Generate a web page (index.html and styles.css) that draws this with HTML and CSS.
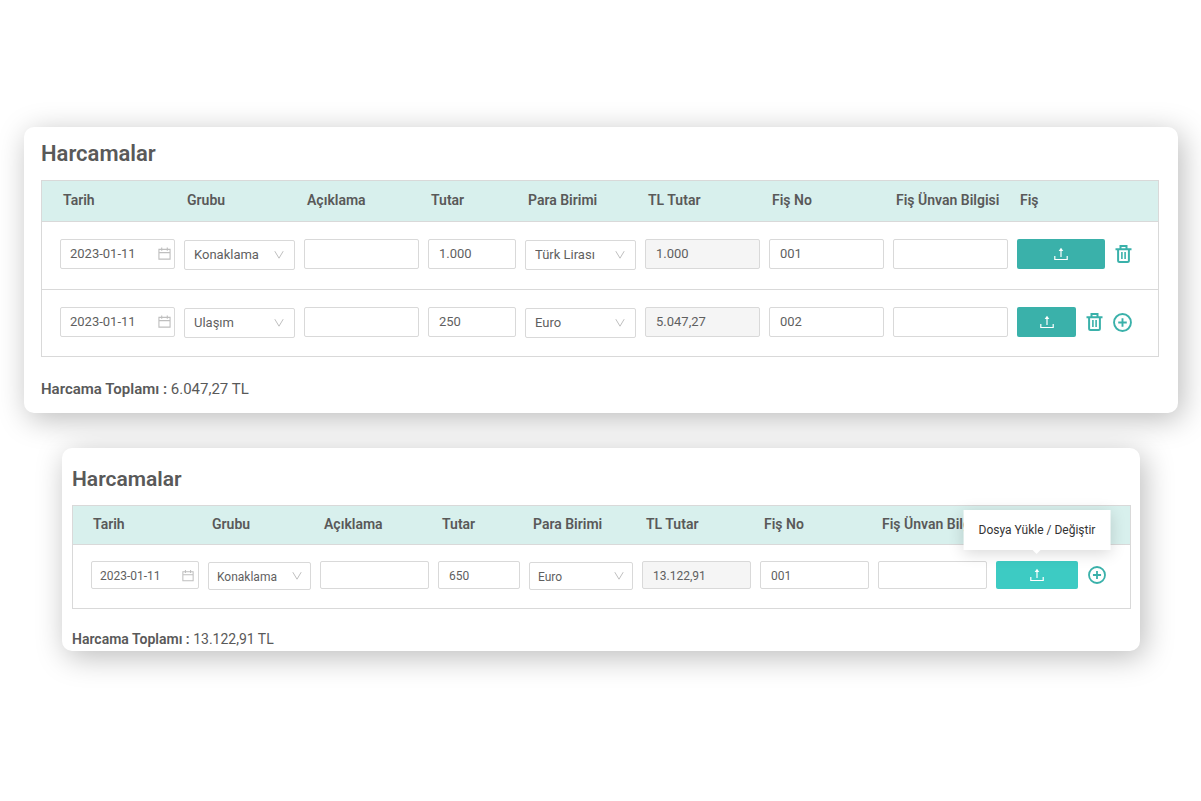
FILE: index.html
```html
<!DOCTYPE html>
<html lang="tr">
<head>
    <meta charset="UTF-8">
    <meta name="viewport" content="width=device-width, initial-scale=1.0">
    <title>Harcamalar</title>
    <link rel="stylesheet" href="styles.css">
</head>
<body>
    <svg class="sprite" aria-hidden="true">
        <symbol id="calendar" viewBox="0 0 14 14">
            <path d="M1 2.500h12v10.500h-12zM1 6h12M4 .5v3.500M10 .5v3.500" fill="none" stroke="currentColor" stroke-width="1.200"/>
        </symbol>
        <symbol id="chevron" viewBox="0 0 10 10">
            <path d="M.8 1.200L5 8.200l4.200-7" fill="none" stroke="currentColor"/>
        </symbol>
        <symbol id="upload" viewBox="0 0 14 14">
            <path d="M.8 9v3.500h12.400V9M7 10V2.500" fill="none" stroke="currentColor" stroke-width="1.200"/>
            <path d="M7 .8l2.300 3.200H4.700z" fill="currentColor"/>
        </symbol>
        <symbol id="trash" viewBox="0 0 16 18">
            <path d="M0 4.200h16M5 4V1h6v3M2.600 4v11.500q0 1.500 1.500 1.500h7.800q1.500 0 1.500-1.500V4" fill="none" stroke="currentColor" stroke-width="2"/>
            <path d="M6.400 7v7M9.600 7v7" fill="none" stroke="currentColor" stroke-width="1.600"/>
        </symbol>
        <symbol id="plus" viewBox="0 0 20 20">
            <circle cx="10" cy="10" r="8.900" fill="none" stroke="currentColor" stroke-width="2"/>
            <path d="M10 5.500v9M5.500 10h9" fill="none" stroke="currentColor" stroke-width="2"/>
        </symbol>
    </svg>

    <main>
        <section class="panel">
            <h2>Harcamalar</h2>
            <table>
                <colgroup>
                    <col class="col-date"><col class="col-group"><col class="col-text"><col class="col-amount"><col class="col-currency">
                    <col class="col-text"><col class="col-text"><col class="col-text"><col class="col-actions">
                </colgroup>
                <thead>
                    <tr>
                        <th>Tarih</th>
                        <th>Grubu</th>
                        <th>Açıklama</th>
                        <th>Tutar</th>
                        <th>Para Birimi</th>
                        <th>TL Tutar</th>
                        <th>Fiş No</th>
                        <th>Fiş Ünvan Bilgisi</th>
                        <th>Fiş</th>
                    </tr>
                </thead>
                <tbody>
                    <tr>
                        <td><div class="field"><input type="text" aria-label="Tarih" value="2023-01-11"><svg class="calendar"><use href="#calendar"/></svg></div></td>
                        <td><div class="field select"><select aria-label="Grubu"><option>Konaklama</option><option>Ulaşım</option></select><svg class="chevron"><use href="#chevron"/></svg></div></td>
                        <td><input type="text" aria-label="Açıklama"></td>
                        <td><input type="text" aria-label="Tutar" value="1.000"></td>
                        <td><div class="field select"><select aria-label="Para Birimi"><option>Türk Lirası</option><option>Euro</option></select><svg class="chevron"><use href="#chevron"/></svg></div></td>
                        <td><input type="text" aria-label="TL Tutar" value="1.000" readonly></td>
                        <td><input type="text" aria-label="Fiş No" value="001"></td>
                        <td><input type="text" aria-label="Fiş Ünvan Bilgisi"></td>
                        <td>
                            <div class="actions">
                                <button class="upload" type="button" aria-label="Dosya Yükle"><svg><use href="#upload"/></svg></button>
                                <button class="icon trash" type="button" aria-label="Sil"><svg><use href="#trash"/></svg></button>
                            </div>
                        </td>
                    </tr>
                    <tr>
                        <td><div class="field"><input type="text" aria-label="Tarih" value="2023-01-11"><svg class="calendar"><use href="#calendar"/></svg></div></td>
                        <td><div class="field select"><select aria-label="Grubu"><option>Ulaşım</option><option>Konaklama</option></select><svg class="chevron"><use href="#chevron"/></svg></div></td>
                        <td><input type="text" aria-label="Açıklama"></td>
                        <td><input type="text" aria-label="Tutar" value="250"></td>
                        <td><div class="field select"><select aria-label="Para Birimi"><option>Euro</option><option>Türk Lirası</option></select><svg class="chevron"><use href="#chevron"/></svg></div></td>
                        <td><input type="text" aria-label="TL Tutar" value="5.047,27" readonly></td>
                        <td><input type="text" aria-label="Fiş No" value="002"></td>
                        <td><input type="text" aria-label="Fiş Ünvan Bilgisi"></td>
                        <td>
                            <div class="actions">
                                <button class="upload" type="button" aria-label="Dosya Yükle"><svg><use href="#upload"/></svg></button>
                                <button class="icon trash" type="button" aria-label="Sil"><svg><use href="#trash"/></svg></button>
                                <button class="icon plus" type="button" aria-label="Ekle"><svg><use href="#plus"/></svg></button>
                            </div>
                        </td>
                    </tr>
                </tbody>
            </table>
            <p class="total"><strong>Harcama Toplamı :</strong> 6.047,27 TL</p>
        </section>

        <section class="panel small">
            <h2>Harcamalar</h2>
            <table>
                <colgroup>
                    <col class="col-date"><col class="col-group"><col class="col-text"><col class="col-amount"><col class="col-currency">
                    <col class="col-text"><col class="col-text"><col class="col-text"><col class="col-actions">
                </colgroup>
                <thead>
                    <tr>
                        <th>Tarih</th>
                        <th>Grubu</th>
                        <th>Açıklama</th>
                        <th>Tutar</th>
                        <th>Para Birimi</th>
                        <th>TL Tutar</th>
                        <th>Fiş No</th>
                        <th>Fiş Ünvan Bilgisi</th>
                        <th></th>
                    </tr>
                </thead>
                <tbody>
                    <tr>
                        <td><div class="field"><input type="text" aria-label="Tarih" value="2023-01-11"><svg class="calendar"><use href="#calendar"/></svg></div></td>
                        <td><div class="field select"><select aria-label="Grubu"><option>Konaklama</option><option>Ulaşım</option></select><svg class="chevron"><use href="#chevron"/></svg></div></td>
                        <td><input type="text" aria-label="Açıklama"></td>
                        <td><input type="text" aria-label="Tutar" value="650"></td>
                        <td><div class="field select"><select aria-label="Para Birimi"><option>Euro</option><option>Türk Lirası</option></select><svg class="chevron"><use href="#chevron"/></svg></div></td>
                        <td><input type="text" aria-label="TL Tutar" value="13.122,91" readonly></td>
                        <td><input type="text" aria-label="Fiş No" value="001"></td>
                        <td><input type="text" aria-label="Fiş Ünvan Bilgisi"></td>
                        <td>
                            <div class="actions">
                                <button class="upload active" type="button" aria-describedby="upload-tip"><svg><use href="#upload"/></svg><span class="tooltip" id="upload-tip" role="tooltip">Dosya Yükle / Değiştir</span></button>
                                <button class="icon plus" type="button" aria-label="Ekle"><svg><use href="#plus"/></svg></button>
                            </div>
                        </td>
                    </tr>
                </tbody>
            </table>
            <p class="total"><strong>Harcama Toplamı :</strong> 13.122,91 TL</p>
        </section>
    </main>
</body>
</html>
```
FILE: styles.css
```css
* {
    box-sizing: border-box;
}

body {
    margin: 0;
    font-family: Roboto, sans-serif;
    background-color: #fff;
    color: #595959;
}

.sprite {
    display: none;
}

main {
    padding: 127px 23px 40px 24px;
}

.panel {
    padding: 13px 19px 14px 17px;
    background-color: #fff;
    border-radius: 10px;
    box-shadow: 4px 6px 30px rgba(0, 0, 0, 0.27);
}

h2 {
    margin: 0 0 12px;
    font-size: 22px;
    line-height: 28px;
    font-weight: 600;
}

/* Expense table */
table {
    width: 100%;
    table-layout: fixed;
    border: 1px solid #d9d9d9;
    border-spacing: 0;
}

.col-date {
    width: 142px;
}

.col-group, .col-currency {
    width: 120px;
}

.col-text {
    width: 124px;
}

.col-amount {
    width: 97px;
}

.col-actions {
    width: 141px;
}

th {
    height: 41px;
    padding: 0 0 2px 3px;
    background-color: #d8f0ed;
    border-bottom: 1px solid #d9d9d9;
    font-size: 14px;
    font-weight: 600;
    text-align: left;
    white-space: nowrap;
}

th:first-child {
    padding-left: 21px;
}

td {
    padding: 17px 9px 19px 0;
    vertical-align: top;
}

td:first-child {
    padding-left: 18px;
}

td:last-child {
    padding-right: 26px;
}

tr + tr td {
    padding-bottom: 18px;
    border-top: 1px solid #d9d9d9;
}

/* Fields */
.field {
    position: relative;
}

.select {
    padding-top: 1px;
}

input, select {
    display: block;
    width: 100%;
    height: 30px;
    margin: 0;
    padding: 0 10px 1px;
    background-color: #fff;
    border: 1px solid #d9d9d9;
    border-radius: 2px;
    color: #5f5f5f;
    font-family: inherit;
    font-size: 13px;
}

select {
    appearance: none;
}

.field input, .field select {
    padding-left: 9px;
}

input[readonly] {
    background-color: #f5f5f5;
}

.calendar, .chevron {
    position: absolute;
    pointer-events: none;
    color: #bfbfbf;
}

.calendar {
    top: 8px;
    right: 4px;
    width: 13px;
    height: 13px;
}

.chevron {
    top: 11px;
    right: 11px;
    width: 10px;
    height: 10px;
}

/* Row actions */
.actions {
    display: flex;
    align-items: center;
    gap: 10px;
}

button {
    padding: 0;
    border: none;
    font-family: inherit;
    cursor: pointer;
}

button svg {
    display: block;
    width: 100%;
    height: 100%;
}

.upload {
    position: relative;
    display: flex;
    flex: 1;
    align-items: center;
    justify-content: center;
    height: 30px;
    background-color: #3ab1aa;
    border-radius: 2px;
    color: #fff;
}

.upload svg {
    width: 14px;
    height: 14px;
}

.upload.active {
    background-color: #3dcbc3;
}

.icon {
    background: none;
    color: #3ab1aa;
}

.trash {
    width: 17px;
    height: 18px;
}

.plus {
    width: 19px;
    height: 19px;
}

.total {
    margin: 22px 0 0;
    font-size: 15px;
    line-height: 20px;
}

.total strong {
    font-weight: 600;
}

/* Smaller panel */
.small {
    margin: 35px 38px 0 38px;
    padding: 18px 9px 2px 10px;
}

.small h2 {
    margin-bottom: 13px;
    font-size: 21px;
    line-height: 26px;
}

.small .col-date {
    width: 135px;
}

.small .col-group {
    width: 112px;
}

.small .col-currency {
    width: 113px;
}

.small .col-text {
    width: 118px;
}

.small .col-amount {
    width: 91px;
}

.small .col-actions {
    width: 134px;
}

.small th {
    height: 39px;
    padding-left: 4px;
}

.small th:first-child {
    padding-left: 20px;
}

.small td {
    padding-top: 16px;
    padding-bottom: 18px;
}

.small td:last-child {
    padding-right: 24px;
}

.small input, .small select, .small .upload {
    height: 28px;
    padding-bottom: 0;
    font-size: 12px;
}

.small input, .small select {
    padding-top: 1px;
}

.small .field input, .small .field select {
    padding-left: 8px;
}

.small .calendar {
    right: 5px;
    width: 12px;
}

.small .chevron {
    right: 9px;
    top: 10px;
}

.small .plus {
    width: 18px;
    height: 18px;
}

.small .total {
    margin-top: 20px;
    font-size: 14px;
}

.tooltip {
    position: absolute;
    bottom: 39px;
    left: 50%;
    padding: 0 15px;
    background-color: #fff;
    box-shadow: 0 3px 16px rgba(0, 0, 0, 0.16);
    transform: translateX(-50%);
    color: #333;
    font-size: 12px;
    line-height: 40px;
    white-space: nowrap;
}

.tooltip::after {
    content: "";
    position: absolute;
    top: 100%;
    left: 50%;
    margin-left: -4px;
    border: 4px solid transparent;
    border-top-color: #fff;
    border-bottom: none;
}

@media (max-width: 1000px) {
    main {
        padding: 24px;
    }

    .panel, .small {
        margin-left: 0;
        margin-right: 0;
        overflow-x: auto;
    }

    table {
        min-width: 960px;
    }
}
```
